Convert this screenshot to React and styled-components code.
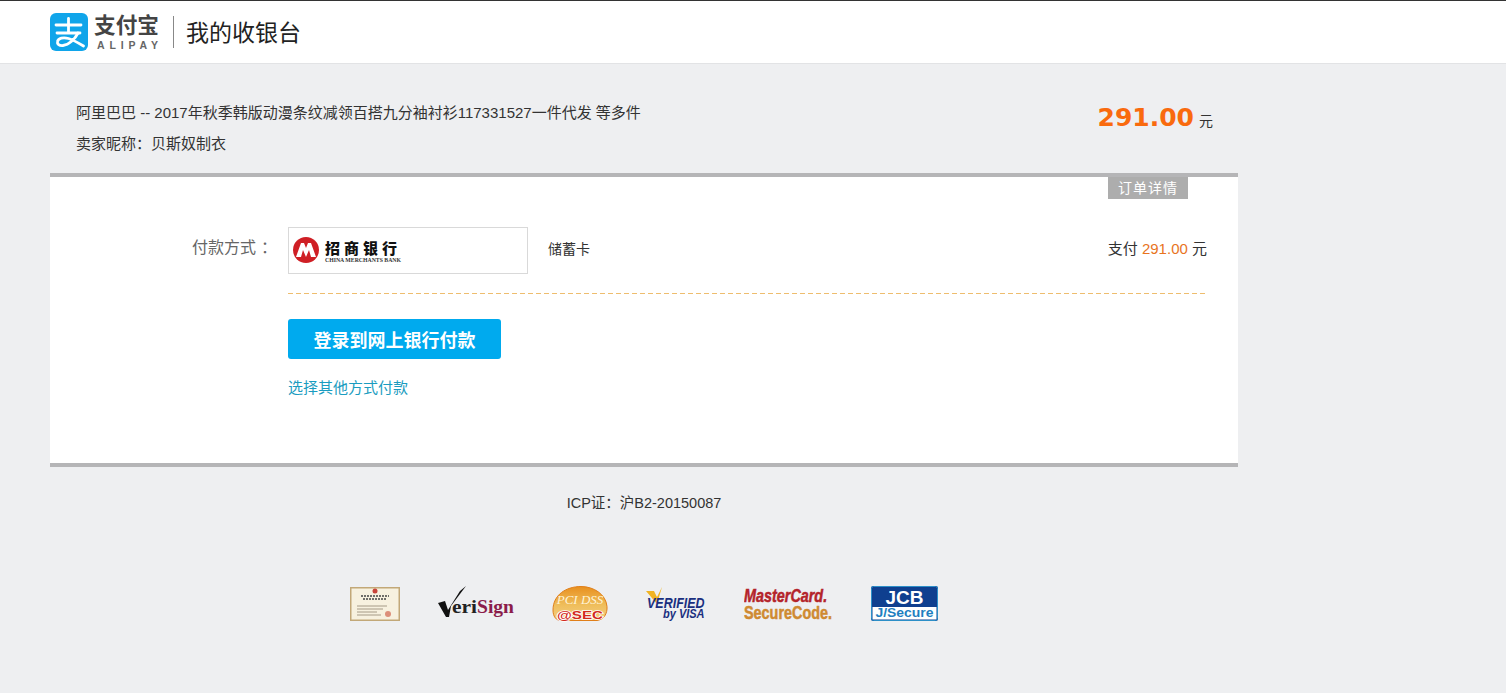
import styled, { createGlobalStyle } from 'styled-components';

const CJK = '"Liberation Sans", "Noto Sans CJK SC", sans-serif';

const GlobalStyle = createGlobalStyle`
    html, body {
        margin: 0;
        padding: 0;
        background-color: #eeeff1;
        font-family: ${CJK};
        color: #333;
    }
    * { box-sizing: border-box; }
`;

const App = () => {
    return (
        <>
            <GlobalStyle />
            <Header>
                <AlipayLogo />
                <HeaderDivider />
                <HeaderTitle>我的收银台</HeaderTitle>
            </Header>

            <Main>
                <Order>
                    <OrderInfo>
                        <OrderLine>阿里巴巴 -- 2017年秋季韩版动漫条纹减领百搭九分袖衬衫117331527一件代发 等多件</OrderLine>
                        <OrderLine>卖家昵称：贝斯奴制衣</OrderLine>
                    </OrderInfo>
                    <OrderAmount>
                        <AmountValue>291.00</AmountValue>
                        <AmountUnit>元</AmountUnit>
                    </OrderAmount>
                </Order>

                <Card>
                    <TabRow><DetailTab>订单详情</DetailTab></TabRow>
                    <PayRow>
                        <PayLabel>付款方式<span>：</span></PayLabel>
                        <BankBox><BankLogo /></BankBox>
                        <CardType>储蓄卡</CardType>
                        <PayAmount>支付 <em>291.00</em> 元</PayAmount>
                    </PayRow>
                    <Divider />
                    <Actions>
                        <PayButton>登录到网上银行付款</PayButton>
                        <OtherLink>选择其他方式付款</OtherLink>
                    </Actions>
                </Card>

                <Icp>ICP证：沪B2-20150087</Icp>

                <Badges>
                    <CertBadge />
                    <VeriSignBadge />
                    <PciBadge />
                    <VisaBadge />
                    <MasterBadge />
                    <JcbBadge />
                </Badges>
            </Main>
        </>
    );
}

export default App


const AlipayLogo = () => (
    <svg width="111" height="50" viewBox="0 -6 111 50">
        <rect width="38" height="38" rx="6" fill="#10a5ea" />
        <g fill="none" stroke="#fff" strokeWidth="2.800" strokeLinecap="round">
            <path d="M6 12h25" />
            <path d="M18.500 5.500v14" />
            <path d="M7 20h23" />
            <path d="M28 20c-3 6-9 12-15 12.500-4 .3-6-1.500-5.500-4 .6-3.400 6-4.600 11-3 5 1.500 10 4.500 15 7.500" />
        </g>
        <text x="44" y="20" fontFamily='"Noto Sans CJK SC"' fontWeight="700" fontSize="21.500" fill="#444" textLength="65" lengthAdjust="spacingAndGlyphs">支付宝</text>
        <text x="47" y="36" fontFamily='"Liberation Sans"' fontWeight="700" fontSize="10.500" fill="#666" textLength="61">ALIPAY</text>
    </svg>
);

const BankLogo = () => (
    <svg width="120" height="40" viewBox="0 0 120 40">
        <circle cx="17" cy="19" r="13" fill="#cf1f25" />
        <path d="M7 26 12 12h3l2 5 2-5h3l5 14h-5l-2-7-3 7-3-7-2 7z" fill="#fff" />
        <text x="36" y="23" fontFamily='"Noto Sans CJK SC"' fontWeight="900" fontSize="15" fill="#111" letterSpacing="4">招商银行</text>
        <text x="36" y="31" fontFamily='"Liberation Serif"' fontWeight="700" fontSize="6" fill="#333" textLength="76" lengthAdjust="spacingAndGlyphs">CHINA MERCHANTS BANK</text>
    </svg>
);

const CertBadge = () => (
    <svg width="50" height="34" viewBox="0 0 50 34">
        <rect x=".75" y=".75" width="48.500" height="32.500" fill="#f7f1df" stroke="#c2a878" strokeWidth="1.500" />
        <circle cx="25" cy="4" r="2.500" fill="#c9453a" />
        <path d="M11 9h28M13 12h24" stroke="#444" strokeWidth="1.500" strokeDasharray="2 1" />
        <path d="M7 19h30M7 22h26M7 25h20M7 28h24" stroke="#a59a86" strokeWidth="1" />
        <circle cx="38" cy="27" r="3" fill="#dc8f7a" />
    </svg>
);

const VeriSignBadge = () => (
    <svg width="78" height="36" viewBox="-1 0 78 36">
        <path d="M0 17 7 15 10 24 22 5 28 0 13 20 11 31H8z" fill="#111" />
        <text x="14" y="27" fontFamily='"Liberation Serif"' fontWeight="700" fontSize="19" fill="#222" textLength="25" lengthAdjust="spacingAndGlyphs">eri</text>
        <text x="39" y="27" fontFamily='"Liberation Serif"' fontWeight="700" fontSize="19" fill="#8a1c4a" textLength="37" lengthAdjust="spacingAndGlyphs">Sign</text>
    </svg>
);

const PciBadge = () => (
    <svg width="56" height="36" viewBox="0 0 56 36">
        <defs>
            <linearGradient id="pciFill" x1="0" y1="0" x2="0" y2="1">
                <stop offset="0" stopColor="#e8901f" />
                <stop offset=".55" stopColor="#efbe5c" />
                <stop offset="1" stopColor="#f3cf84" />
            </linearGradient>
        </defs>
        <path d="M1 24C1 9 14 .5 29 .5c13 0 25 8 26 20 .5 7-3 13-10 14H9c-5 0-8-4-8-10.500z" fill="url(#pciFill)" stroke="#e07f1a" />
        <text x="28" y="18" textAnchor="middle" fontFamily='"Liberation Serif"' fontStyle="italic" fontSize="13" fill="#fff4d6">PCI DSS</text>
        <text x="5" y="33" fontFamily='"Liberation Sans"' fontWeight="700" fontSize="10" fill="#d32a1c" stroke="#fff" strokeWidth="1.500" paintOrder="stroke" textLength="46" lengthAdjust="spacingAndGlyphs">@SEC</text>
    </svg>
);

const VisaBadge = () => (
    <svg width="62" height="34" viewBox="-1 0 62 34">
        <path d="M0 4h8l3 6 5-10-5 17z" fill="#f0b323" />
        <g fontFamily='"Liberation Sans"' fontWeight="700" fontStyle="italic" fill="#1a2f80">
            <text x="1" y="18.900" fontSize="12.500" transform="scale(1 1.110)">VERIFIED</text>
            <text x="17" y="26.500" fontSize="11" transform="scale(1 1.170)">by VISA</text>
        </g>
    </svg>
);

const MasterBadge = () => (
    <svg width="90" height="40" viewBox="0 -3 90 40">
        <g fontFamily='"Liberation Sans"' fontWeight="700" fontSize="14.400" strokeWidth=".4">
            <text x="0" y="11.500" fontStyle="italic" fill="#b4232a" stroke="#b4232a" transform="scale(1 1.310)">MasterCard.</text>
            <text x="0" y="24.400" fill="#cf8a32" stroke="#cf8a32" transform="scale(1 1.310)">SecureCode.</text>
        </g>
    </svg>
);

const JcbBadge = () => (
    <svg width="67" height="37" viewBox="0 0 67 37">
        <rect width="67" height="35" rx="2" fill="#0f3f8f" />
        <rect x="1.500" y="21" width="64" height="12.500" fill="#fff" />
        <rect x=".5" y=".5" width="66" height="34" rx="2" fill="none" stroke="#2c8fc8" />
        <text x="33.500" y="18" textAnchor="middle" fontFamily='"Liberation Sans"' fontWeight="700" fontSize="19" fill="#fff">JCB</text>
        <text x="33.500" y="31" textAnchor="middle" fontFamily='"Liberation Sans"' fontWeight="700" fontSize="12" fill="#1f7fc0" textLength="58" lengthAdjust="spacingAndGlyphs">J/Secure</text>
    </svg>
);


const Header = styled.header`
    display: flex;
    align-items: center;
    height: 64px;
    padding-left: 50px;
    background-color: #fff;
    border-top: 1px solid #333;
    border-bottom: 1px solid #e2e3e5;
`;

const HeaderDivider = styled.div`
    width: 1px;
    height: 32px;
    margin: 0 12px 0 12px;
    background-color: #888;
`;

const HeaderTitle = styled.div`
    padding-bottom: 2px;
    font-size: 23px;
    color: #222;
`;

const Main = styled.main`
    width: 1188px;
    margin-left: 50px;
`;

const Order = styled.section`
    display: flex;
    justify-content: space-between;
    height: 109px;
    padding: 39px 25px 0 26px;
`;

const OrderInfo = styled.div`
    display: flex;
    flex-direction: column;
    gap: 11px;
`;

const OrderLine = styled.div`
    font-size: 15px;
    line-height: 20px;
    color: #333;
`;

const OrderAmount = styled.div`
    display: flex;
    align-items: baseline;
    gap: 5px;
    height: 34px;
`;

const AmountValue = styled.span`
    font-family: "DejaVu Sans", sans-serif;
    font-weight: 700;
    font-size: 25px;
    color: #f96a0e;
`;

const AmountUnit = styled.span`
    font-size: 14px;
    color: #333;
`;

const Card = styled.section`
    height: 294px;
    background-color: #fff;
    border-top: 4px solid #b5b5b7;
    border-bottom: 4px solid #b5b5b7;
`;

const TabRow = styled.div`
    display: flex;
    justify-content: flex-end;
    padding-right: 50px;
`;

const DetailTab = styled.div`
    width: 80px;
    height: 22px;
    font-size: 14px;
    line-height: 22px;
    text-align: center;
    letter-spacing: 1px;
    color: #fff;
    background-color: #adadad;
`;

const PayRow = styled.div`
    display: flex;
    align-items: center;
    height: 94px;
    margin: 0 31px 0 238px;
    padding: 28px 0 19px;
    position: relative;
`;

const Divider = styled.div`
    height: 1px;
    margin: 0 31px 0 238px;
    background: repeating-linear-gradient(to right, #eebd6e 0 5px, transparent 5px 8px);
`;

const PayLabel = styled.div`
    position: absolute;
    right: 100%;
    width: 140px;
    padding-right: 11px;
    padding-bottom: 10px;
    font-size: 16px;
    text-align: right;
    color: #666;
    span {
        margin-left: 5px;
    }
`;

const BankBox = styled.div`
    display: flex;
    align-items: center;
    width: 240px;
    height: 47px;
    border: 1px solid #d9d9d9;
`;

const CardType = styled.div`
    margin-left: 20px;
    padding-bottom: 5px;
    font-size: 14px;
    color: #333;
`;

const PayAmount = styled.div`
    margin-left: auto;
    padding-bottom: 7px;
    font-size: 15px;
    color: #333;
    em {
        font-style: normal;
        color: #e8741e;
    }
`;

const Actions = styled.div`
    display: flex;
    flex-direction: column;
    align-items: flex-start;
    gap: 19px;
    padding: 25px 0 0 238px;
`;

const PayButton = styled.button`
    width: 213px;
    height: 40px;
    padding: 0;
    border: none;
    border-radius: 3px;
    font-family: "Liberation Serif", "Noto Sans CJK SC", serif;
    font-weight: 700;
    font-size: 18px;
    color: #fff;
    background-color: #00aaee;
`;

const OtherLink = styled.a`
    font-size: 15px;
    line-height: 20px;
    color: #1a9cc0;
`;

const Icp = styled.div`
    margin-top: 26px;
    font-size: 14.500px;
    line-height: 20px;
    text-align: center;
    color: #333;
`;

const Badges = styled.div`
    display: flex;
    align-items: center;
    justify-content: space-between;
    width: 588px;
    height: 38px;
    margin: 72px 0 0 300px;
`;
